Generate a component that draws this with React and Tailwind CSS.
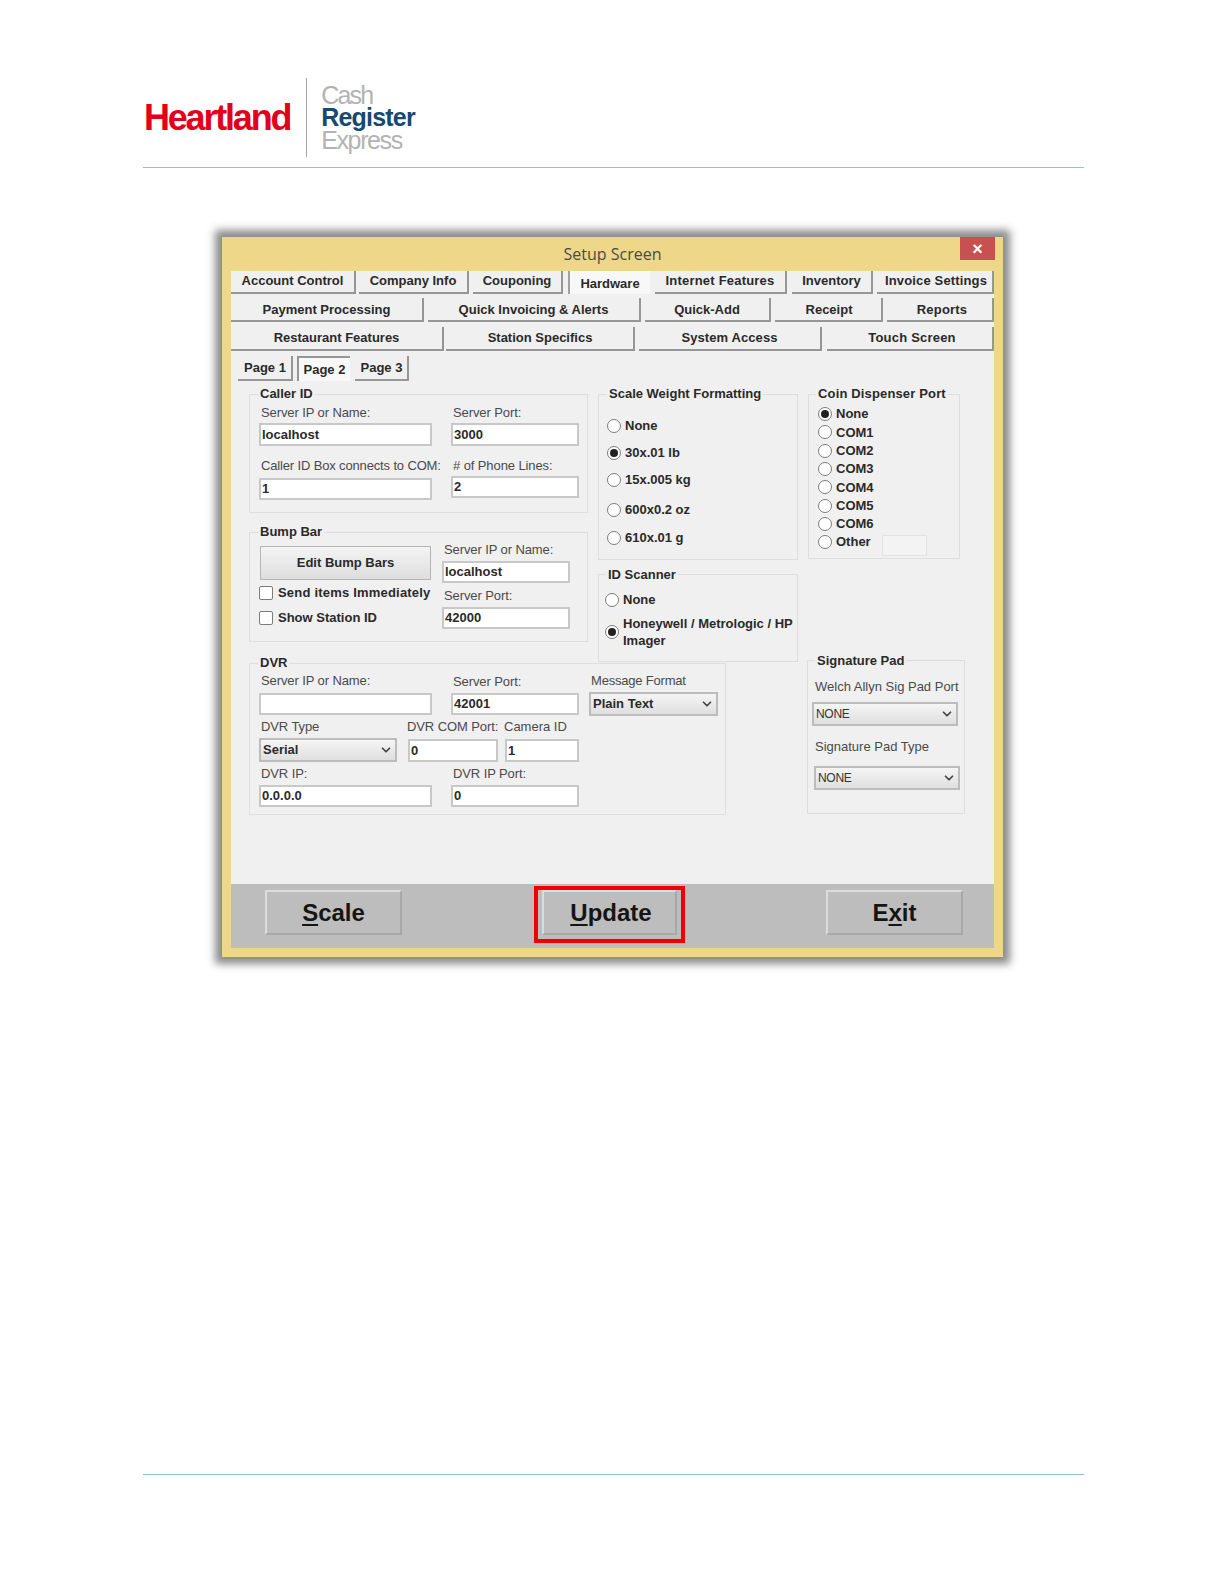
import { ChevronDown } from "lucide-react";

const ROW_ONE = [
  { text: "Account Control", cls: "w-[125px] pb-[1px]" },
  { text: "Company Info", cls: "w-[110px] ml-[3px] pb-[1px]" },
  { text: "Couponing", cls: "w-[90px] ml-[4px] pb-[1px]" },
  { text: "Hardware", cls: "w-[82px] ml-[5px] pb-[1px]", active: true },
  { text: "Internet Features", cls: "w-[132px] ml-[5px] pb-[1px] tracking-[0.2px]" },
  { text: "Inventory", cls: "w-[81px] ml-[5px] pb-[1px]" },
  { text: "Invoice Settings", cls: "w-[117px] ml-[4px] pb-[1px] pl-[3px] tracking-[0.15px]" },
];

const ROW_TWO = [
  { text: "Payment Processing", cls: "w-[193px] pt-[1px]" },
  { text: "Quick Invoicing & Alerts", cls: "w-[213px] ml-[4px] pt-[1px]" },
  { text: "Quick-Add", cls: "w-[126px] ml-[4px] pt-[1px]" },
  { text: "Receipt", cls: "w-[108px] ml-[4px] pt-[1px] pl-[2px]" },
  { text: "Reports", cls: "w-[107px] ml-[4px] pt-[1px] pl-[5px] tracking-[0.2px]" },
];

const ROW_THREE = [
  { text: "Restaurant Features", cls: "w-[213px]" },
  { text: "Station Specifics", cls: "w-[189px] ml-[2px] pl-[1px]" },
  { text: "System Access", cls: "w-[183px] ml-[4px] tracking-[0.1px]" },
  { text: "Touch Screen", cls: "w-[167px] ml-[5px] pl-[5px] tracking-[0.2px]" },
];

const SCALE = [
  { text: "None", cls: "mt-[24px]" },
  { text: "30x.01 lb", cls: "mt-[13px]", on: true },
  { text: "15x.005 kg", cls: "mt-[13px]" },
  { text: "600x0.2 oz", cls: "mt-[16px]" },
  { text: "610x.01 g", cls: "mt-[14px]" },
];

const COM_PORTS = ["COM1", "COM2", "COM3", "COM4", "COM5", "COM6"];

const Tab = ({ text, cls, active }) => (
  <div
    className={`flex items-center justify-center text-[13px] font-bold text-[#2a2a2a] ${cls} ${
      active
        ? "bg-[#f8f8f8] border-l-2 border-l-[#a0a0a0] pt-[3px]"
        : "bg-[#f0f0f0] border-r-2 border-b-2 border-r-[#969696] border-b-[#969696]"
    }`}
  >
    {text}
  </div>
);

const Group = ({ title, titleCls, cls, children }) => (
  <div className={`relative border border-[#dedede] ${cls}`}>
    <span
      className={`absolute -top-[8px] bg-[#f0f0f0] px-[2px] leading-[14px] text-[13px] font-bold text-[#2a2a2a] whitespace-nowrap ${titleCls}`}
    >
      {title}
    </span>
    {children}
  </div>
);

const Label = ({ text, cls = "pl-[2px] tracking-[-0.1px]" }) => (
  <div className={`h-[14px] leading-[14px] text-[13px] text-[#4a4a4a] whitespace-nowrap ${cls}`}>
    {text}
  </div>
);

const Input = ({ value, cls }) => (
  <div
    className={`flex items-center bg-white border-2 border-[#c8c8c8] pl-[1px] text-[13px] font-bold text-[#2a2a2a] ${cls}`}
  >
    {value}
  </div>
);

const Select = ({ value, cls, textCls = "font-bold text-[13px] text-[#2a2a2a]" }) => (
  <div
    className={`flex items-center justify-between bg-gradient-to-b from-[#f5f5f5] to-[#dfdfdf] border-2 border-[#bcbcbc] pl-[2px] pr-[2px] ${cls}`}
  >
    <span className={textCls}>{value}</span>
    <ChevronDown size={14} strokeWidth={3} className="text-[#444]" />
  </div>
);

const Radio = ({ on }) => (
  <span className="flex items-center justify-center w-[14px] h-[14px] shrink-0 rounded-full bg-white border border-[#7c7c7c]">
    {on && <span className="w-[8px] h-[8px] rounded-full bg-[#222]" />}
  </span>
);

const Check = ({ text, cls }) => (
  <div className={`flex items-center h-[14px] ${cls}`}>
    <span className="w-[14px] h-[14px] bg-white border border-[#7c7c7c] rounded-[2px]" />
    <span className="ml-[5px] text-[13px] font-bold text-[#2a2a2a] whitespace-nowrap">{text}</span>
  </div>
);

const Big = ({ first, rest, pre, cls }) => (
  <div
    className={`flex items-center justify-center w-[137px] h-[45px] bg-[#bdbdbd] border-2 border-t-[#dcdcdc] border-l-[#dcdcdc] border-r-[#a8a8a8] border-b-[#a8a8a8] text-[24px] font-bold text-[#151515] ${cls}`}
  >
    <span>
      {pre}
      <span className="underline underline-offset-[3px]">{first}</span>
      {rest}
    </span>
  </div>
);

export default function App() {
  return (
    <div className="w-[1224px] h-[1584px] bg-white font-['Liberation_Sans',Arial,sans-serif] overflow-hidden">
      {/* logo */}
      <div className="flex items-center h-[79px] mt-[78px] ml-[144px]">
        <span className="text-[36px] font-bold tracking-[-2.2px] text-[#e2001a] leading-none">Heartland</span>
        <div className="w-px h-[79px] bg-[#a5a5a5] ml-[16px]" />
        <div className="ml-[14px] flex flex-col leading-[22.5px]">
          <span className="text-[25px] tracking-[-1.8px] text-[#b3b3b3]">Cash</span>
          <span className="text-[25px] font-bold tracking-[-0.8px] text-[#17486f]">Register</span>
          <span className="text-[25px] tracking-[-1.4px] text-[#b3b3b3]">Express</span>
        </div>
      </div>
      <div className="h-px bg-[#8fc5cf] ml-[143px] w-[941px] mt-[10px]" />

      {/* setup window */}
      <div className="ml-[222px] mt-[69px] w-[781px] h-[720px] bg-[#eed789] px-[9px] shadow-[0_0_8px_7px_#8c8c8c]">
        <div className="flex h-[34px] relative">
          <span className="mx-auto mt-[7px] font-['Open_Sans',sans-serif] text-[16px] leading-[20px] text-[#4a4a4a]">
            Setup Screen
          </span>
          <span className="absolute right-[-1px] top-0 flex items-center justify-center w-[35px] h-[23px] bg-[#c75050] text-white text-[18px] font-bold leading-none">
            ×
          </span>
        </div>

        <div className="bg-[#f0f0f0] h-[613px]">
          <div className="flex h-[23px]">
            {ROW_ONE.map((t) => (
              <Tab key={t.text} {...t} />
            ))}
          </div>
          <div className="flex h-[24px] mt-[4px]">
            {ROW_TWO.map((t) => (
              <Tab key={t.text} {...t} />
            ))}
          </div>
          <div className="flex h-[24px] mt-[5px]">
            {ROW_THREE.map((t) => (
              <Tab key={t.text} {...t} />
            ))}
          </div>

          <div className="flex h-[25px] mt-[5px] ml-[7px]">
            <Tab text="Page 1" cls="w-[55px] pt-[1px] pl-[1px]" />
            <div className="flex items-center justify-center w-[53px] ml-[4px] bg-[#f8f8f8] border-l-2 border-t-2 border-l-[#969696] border-t-[#969696] text-[13px] font-bold text-[#2a2a2a]">
              Page 2
            </div>
            <Tab text="Page 3" cls="w-[54px] ml-[5px] pt-[1px] pl-[1px]" />
          </div>

          <div className="flex ml-[18px] mt-[13px]">
            <div>
              <div className="flex">
                <div className="w-[339px]">
                  <Group title="Caller ID" titleCls="left-[8px]" cls="h-[119px]">
                    <div className="flex pl-[9px] pt-[11px]">
                      <div className="w-[173px]">
                        <Label text="Server IP or Name:" />
                        <Input value="localhost" cls="h-[23px] mt-[3px]" />
                        <Label text="Caller ID Box connects to COM:" cls="pl-[2px] mt-[13px] tracking-[-0.15px]" />
                        <Input value="1" cls="h-[22px] mt-[5px]" />
                      </div>
                      <div className="w-[128px] ml-[19px]">
                        <Label text="Server Port:" />
                        <Input value="3000" cls="h-[23px] mt-[3px]" />
                        <Label text="# of Phone Lines:" cls="pl-[2px] mt-[13px] tracking-[-0.1px]" />
                        <Input value="2" cls="h-[22px] mt-[3px]" />
                      </div>
                    </div>
                  </Group>
                  <Group title="Bump Bar" titleCls="left-[8px]" cls="h-[110px] mt-[19px]">
                    <div className="flex pl-[9px]">
                      <div className="w-[183px] pt-[13px]">
                        <div className="flex items-center justify-center ml-[1px] w-[171px] h-[34px] bg-gradient-to-b from-[#f4f4f4] to-[#dedede] border border-[#b5b5b5] text-[13px] font-bold text-[#2a2a2a]">
                          Edit Bump Bars
                        </div>
                        <Check text="Send items Immediately" cls="mt-[6px] tracking-[0.2px]" />
                        <Check text="Show Station ID" cls="mt-[11px]" />
                      </div>
                      <div className="w-[128px] pt-[10px]">
                        <Label text="Server IP or Name:" />
                        <Input value="localhost" cls="h-[22px] mt-[4px]" />
                        <Label text="Server Port:" cls="pl-[2px] mt-[6px] tracking-[-0.1px]" />
                        <Input value="42000" cls="h-[22px] mt-[4px]" />
                      </div>
                    </div>
                  </Group>
                </div>

                <div className="w-[200px] ml-[10px]">
                  <Group title="Scale Weight Formatting" titleCls="left-[8px]" cls="h-[166px] pl-[8px]">
                    {SCALE.map((s) => (
                      <div key={s.text} className={`flex items-center h-[14px] ${s.cls}`}>
                        <Radio on={s.on} />
                        <span className="ml-[4px] text-[13px] font-bold text-[#2a2a2a]">{s.text}</span>
                      </div>
                    ))}
                  </Group>
                  <Group title="ID Scanner" titleCls="left-[7px] mt-[1px]" cls="h-[88px] mt-[14px] pl-[6px]">
                    <div className="flex items-center h-[14px] mt-[18px]">
                      <Radio />
                      <span className="ml-[4px] text-[13px] font-bold text-[#2a2a2a]">None</span>
                    </div>
                    <div className="flex items-center mt-[8px]">
                      <Radio on />
                      <span className="ml-[4px] text-[13px] leading-[17px] font-bold text-[#2a2a2a] whitespace-nowrap">
                        Honeywell / Metrologic / HP
                        <br />
                        Imager
                      </span>
                    </div>
                  </Group>
                </div>
              </div>

              <Group title="DVR" titleCls="left-[8px]" cls="w-[477px] h-[152px] mt-[1px] pl-[9px] pt-[10px]">
                <div className="flex h-[42px]">
                  <div className="w-[173px]">
                    <Label text="Server IP or Name:" />
                    <Input value="" cls="h-[22px] mt-[5px]" />
                  </div>
                  <div className="w-[128px] ml-[19px]">
                    <Label text="Server Port:" cls="pl-[2px] mt-[1px] tracking-[-0.1px]" />
                    <Input value="42001" cls="h-[22px] mt-[4px]" />
                  </div>
                  <div className="w-[129px] ml-[10px]">
                    <Label text="Message Format" cls="pl-[2px] tracking-[-0.2px]" />
                    <Select value="Plain Text" cls="h-[24px] mt-[4px]" />
                  </div>
                </div>
                <div className="flex h-[42px] mt-[4px]">
                  <div className="w-[149px]">
                    <Label text="DVR Type" />
                    <Select value="Serial" cls="w-[138px] h-[24px] mt-[4px]" />
                  </div>
                  <div className="w-[97px]">
                    <Label text="DVR COM Port:" cls="-ml-[1px] tracking-[-0.1px]" />
                    <Input value="0" cls="w-[90px] h-[23px] mt-[5px]" />
                  </div>
                  <div className="w-[74px]">
                    <Label text="Camera ID" cls="-ml-[1px]" />
                    <Input value="1" cls="h-[23px] mt-[5px]" />
                  </div>
                </div>
                <div className="flex mt-[5px]">
                  <div className="w-[173px]">
                    <Label text="DVR IP:" />
                    <Input value="0.0.0.0" cls="h-[22px] mt-[4px]" />
                  </div>
                  <div className="w-[128px] ml-[19px]">
                    <Label text="DVR IP Port:" />
                    <Input value="0" cls="h-[22px] mt-[4px]" />
                  </div>
                </div>
              </Group>
            </div>

            <div className="ml-[9px]">
              <Group title="Coin Dispenser Port" titleCls="left-[7px] tracking-[0.15px]" cls="w-[152px] h-[165px] ml-[1px] pl-[9px] pt-[10px]">
                <div className="flex items-center h-[18.3px]">
                  <Radio on />
                  <span className="ml-[4px] text-[13px] font-bold text-[#2a2a2a]">None</span>
                </div>
                {COM_PORTS.map((c) => (
                  <div key={c} className="flex items-center h-[18.3px]">
                    <Radio />
                    <span className="ml-[4px] text-[13px] font-bold text-[#2a2a2a]">{c}</span>
                  </div>
                ))}
                <div className="flex items-center h-[18.3px]">
                  <Radio />
                  <span className="ml-[4px] w-[46px] text-[13px] font-bold text-[#2a2a2a]">Other</span>
                  <span className="w-[45px] h-[21px] mt-[6px] bg-[#f3f3f3] border border-[#e2e2e2]" />
                </div>
              </Group>
              <Group title="Signature Pad" titleCls="left-[7px] mt-[1px]" cls="w-[158px] h-[154px] mt-[101px] pl-[4px] pt-[19px]">
                <Label text="Welch Allyn Sig Pad Port" cls="pl-[3px]" />
                <Select value="NONE" cls="w-[146px] h-[24px] mt-[8px]" textCls="text-[12px] tracking-[-0.3px] text-[#333]" />
                <Label text="Signature Pad Type" cls="pl-[3px] mt-[14px]" />
                <Select value="NONE" cls="w-[146px] h-[24px] mt-[12px] ml-[2px]" textCls="text-[12px] tracking-[-0.3px] text-[#333]" />
              </Group>
            </div>
          </div>
        </div>

        {/* footer buttons */}
        <div className="flex items-start h-[64px] bg-[#bdbdbd] pt-[2px] pl-[34px]">
          <Big first="S" rest="cale" cls="mt-[4px]" />
          <div className="ml-[132px] w-[151px] h-[57px] border-4 border-[#f00000] pl-[4px]">
            <Big first="U" rest="pdate" cls="!w-[135px] pl-[3px]" />
          </div>
          <Big pre="E" first="x" rest="it" cls="mt-[4px] ml-[141px]" />
        </div>
      </div>

      <div className="h-px bg-[#8fc5cf] ml-[143px] w-[941px] mt-[517px]" />
    </div>
  );
}
